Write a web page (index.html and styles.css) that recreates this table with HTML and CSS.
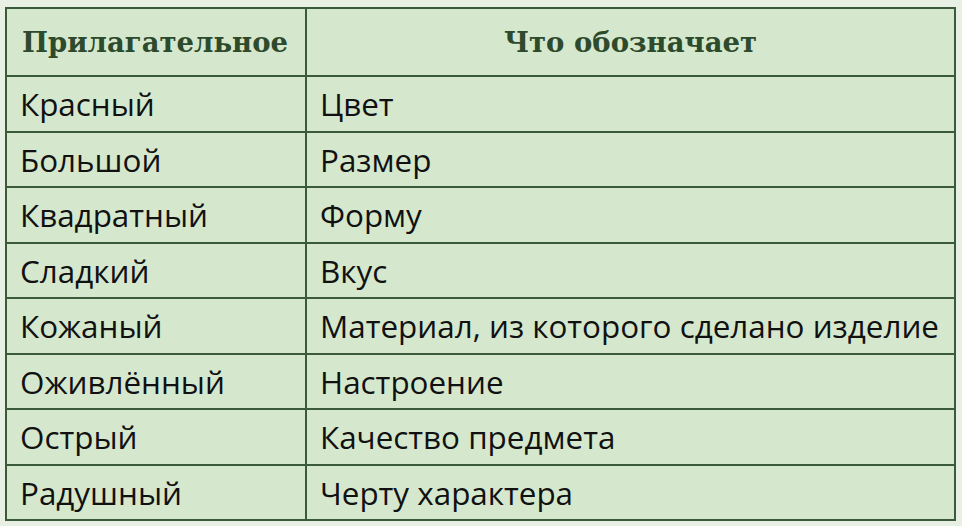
FILE: index.html
```html
<!DOCTYPE html>
<html lang="ru">
<head>
<meta charset="utf-8">
<link rel="stylesheet" href="styles.css">
</head>
<body>
<table class="adj">
  <thead>
    <tr><th class="c1">Прилагательное</th><th class="c2">Что обозначает</th></tr>
  </thead>
  <tbody>
    <tr><td>Красный</td><td>Цвет</td></tr>
    <tr><td>Большой</td><td>Размер</td></tr>
    <tr><td>Квадратный</td><td>Форму</td></tr>
    <tr><td>Сладкий</td><td>Вкус</td></tr>
    <tr><td>Кожаный</td><td>Материал, из которого сделано изделие</td></tr>
    <tr><td>Оживлённый</td><td>Настроение</td></tr>
    <tr><td>Острый</td><td>Качество предмета</td></tr>
    <tr><td>Радушный</td><td>Черту характера</td></tr>
  </tbody>
</table>
</body>
</html>
```
FILE: styles.css
```css
html, body { margin: 0; padding: 0; }
body {
  background: #e7f0e3;
  width: 962px;
  height: 526px;
  overflow: hidden;
  padding: 7px 0 0 5px;
  box-sizing: border-box;
}
.adj {
  border-collapse: collapse;
  width: 951px;
  background: #d5e8ce;
  table-layout: fixed;
}
.adj th, .adj td {
  border: 2px solid #3b5a3a;
  padding: 0 0 0 13px;
  text-align: left;
  vertical-align: middle;
  white-space: nowrap;
}
.adj th {
  height: 66px;
  font-family: "DejaVu Serif", "Liberation Serif", serif;
  font-weight: bold;
  font-size: 27.5px;
  color: #2e4a2c;
  padding-left: 15px;
}
.adj th.c1 { width: 283px; }
.adj th.c2 { text-align: center; padding: 0; }
.adj td {
  height: 53.5px;
  font-family: "Open Sans", "Noto Sans", sans-serif;
  font-size: 31.4px;
  color: #111;
}
```
